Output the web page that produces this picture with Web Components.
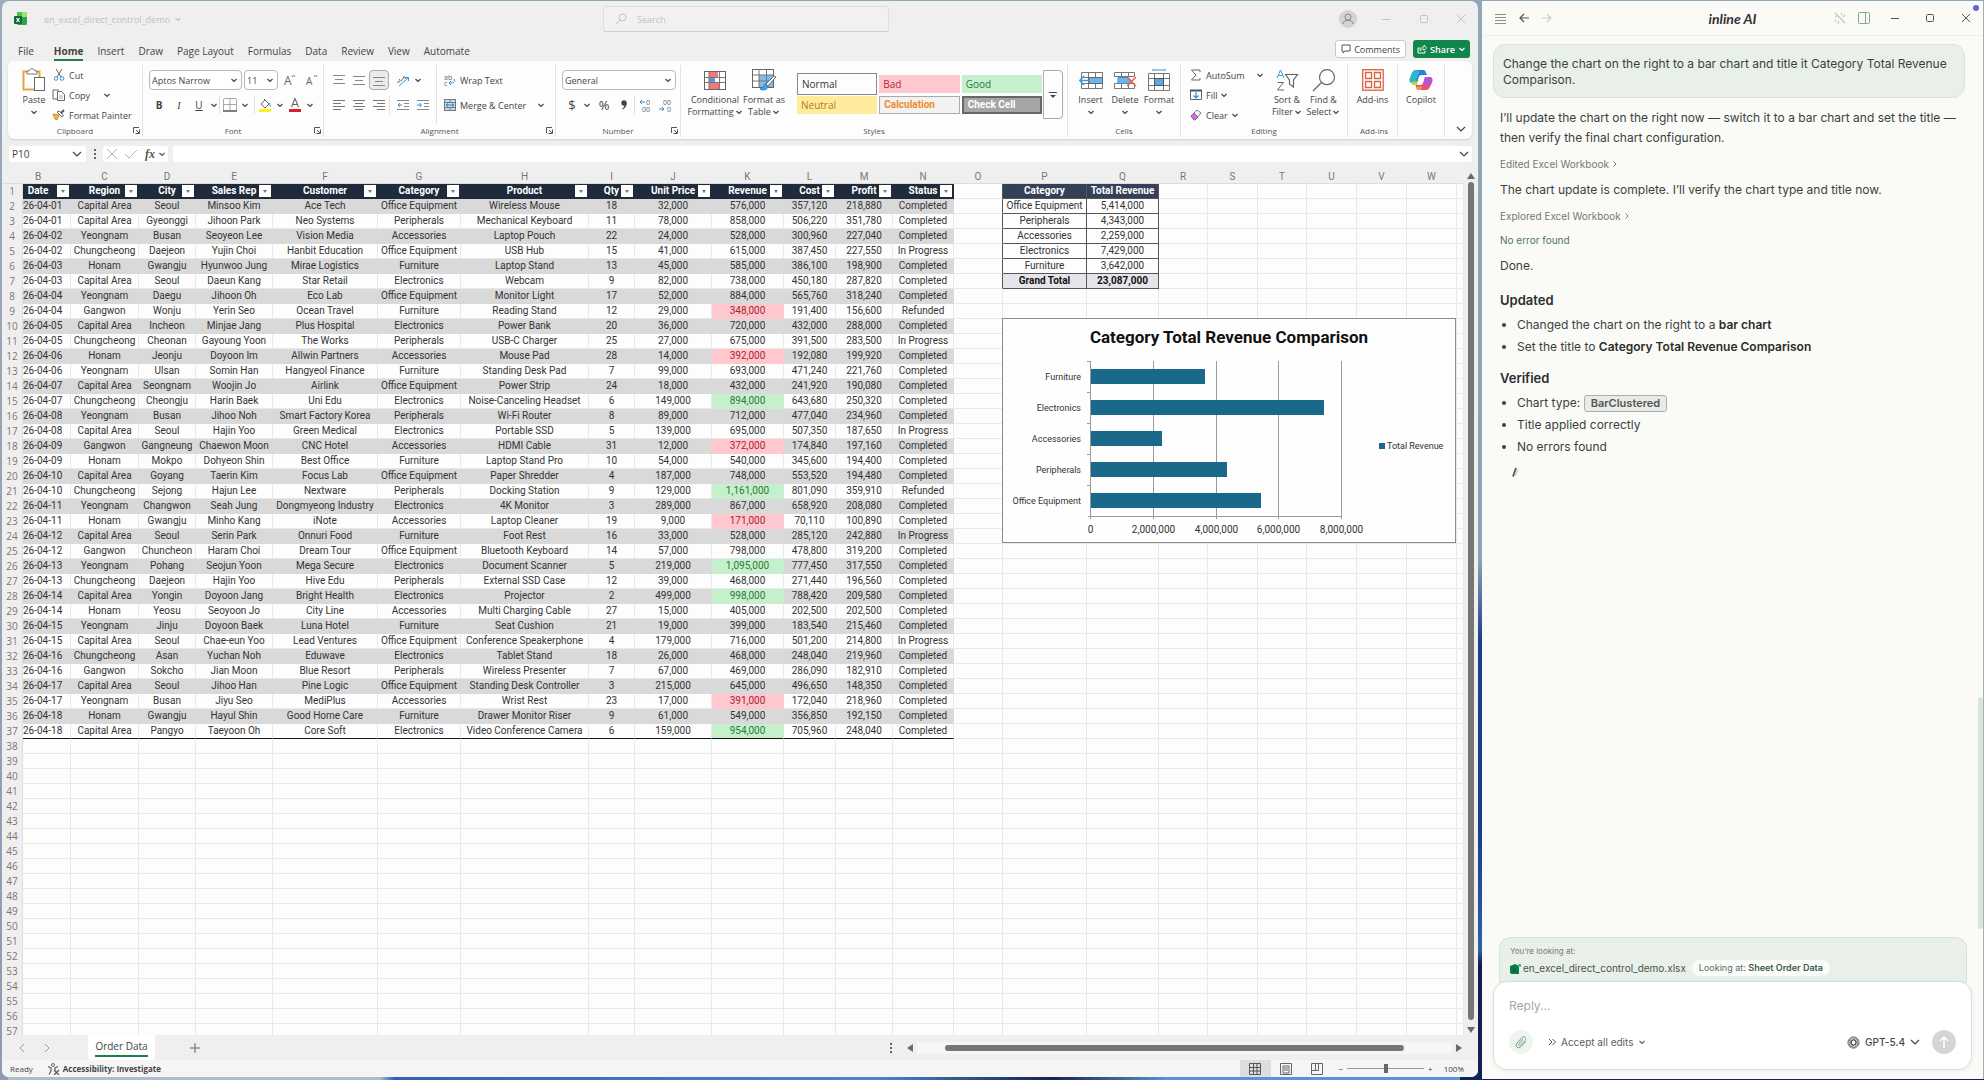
<!DOCTYPE html>
<html lang="en">
<head>
<meta charset="utf-8">
<title>en_excel_direct_control_demo</title>
<style>
html,body{height:100%;margin:0}
body{display:flex;overflow:hidden;font-family:"Open Sans","Noto Sans",sans-serif;font-size:10px;color:#444;
 background:linear-gradient(#9cabb9,#8f9bb0) 0 0/8px 100% no-repeat,
 linear-gradient(90deg,#aebccb 26%,#3560b4 27%,#4a86cf 60%,#16234f 72%,#5b93d6 80%) 0 100%/1460px 8px no-repeat,
 linear-gradient(#8fa6b6 0,#8ba3b4 560px,#1d3f8c 640px,#173a86 820px,#2c62a8 950px,#101c48 965px,#12235c 100%)}
work-book{flex:1;min-width:0}
chat-panel{flex:0 0 502px}
</style>
</head>
<body>
<work-book></work-book>
<chat-panel></chat-panel>
<script>
const define=(name,html,setup)=>{
  const tpl=document.createElement('template');
  tpl.innerHTML=html;
  customElements.define(name,class extends HTMLElement{
    constructor(){super();this.attachShadow({mode:'open'});}
    connectedCallback(){
      if(this.shadowRoot.childNodes.length)return;
      this.shadowRoot.append(tpl.content.cloneNode(true));
      if(setup)setup(this,this.shadowRoot);
    }
  });
};

/* ---------- icons: [width, height, drawing] ---------- */
const lines=(rows)=>rows.map(([x,w],i)=>`<path d="M${x} ${1.5+i*3}h${w}" stroke="#777"/>`).join('');
const ICONS={
 excel:[14,14,'<rect x="3" y="0" width="10" height="13" rx="1.5" fill="#2ea44f"/><rect x="8" y="0" width="5" height="5" fill="#9be36b"/><rect x="3" y="0" width="5" height="5" fill="#4cc44e"/><rect x="0" y="4" width="8" height="8" rx="1" fill="#0f6a37"/><path d="M2.5 6l3 4M5.5 6l-3 4" stroke="#fff" stroke-width="1.2"/>'],
 chev:[8,8,'<path d="M1.5 3L4 5.5 6.5 3" fill="none" stroke="currentColor" stroke-width="1.2"/>'],
 chevL:[10,8,'<path d="M1 2l4 4 4-4" fill="none" stroke="currentColor" stroke-width="1.2"/>'],
 search:[12,12,'<circle cx="7.5" cy="4.5" r="3.5" fill="none" stroke="currentColor"/><path d="M5 7L1 11" stroke="currentColor"/>'],
 user:[18,18,'<circle cx="9" cy="9" r="9" fill="#cfcfcf"/><circle cx="9" cy="7" r="3" fill="none" stroke="#777"/><path d="M4 14c0-5 10-5 10 0" fill="none" stroke="#777"/>'],
 min:[8,8,'<path d="M0 4.5h8" stroke="currentColor"/>'],
 max:[8,8,'<rect x=".5" y=".5" width="7" height="7" rx="1" fill="none" stroke="currentColor"/>'],
 close:[8,8,'<path d="M0 0l8 8M8 0L0 8" stroke="currentColor"/>'],
 comment:[10,10,'<path d="M1 1h8v6H4L2 9V7H1z" fill="none" stroke="#555"/>'],
 share:[10,10,'<path d="M3 4H1v5h7V7" fill="none" stroke="#fff"/><path d="M3 7c0-3 2-4 4-4V1l2.5 3L7 6.5V5C5 5 4 5.5 3 7z" fill="none" stroke="#fff" stroke-width=".8"/>'],
 paste:[24,24,'<rect x="1.5" y="3.5" width="16" height="18" fill="#fff" stroke="#e8a33d" stroke-width="2"/><path d="M5 5V3h2c1-3 5-3 6 0h2v3H5z" fill="#fff" stroke="#777"/><rect x="12.5" y="9.5" width="10" height="13" fill="#fff" stroke="#666"/>'],
 cut:[12,12,'<path d="M3 0l5 8M9 0L4 8" stroke="#666" fill="none"/><circle cx="3" cy="9.5" r="1.8" fill="none" stroke="#3a8fd0"/><circle cx="9" cy="9.5" r="1.8" fill="none" stroke="#3a8fd0"/>'],
 copy:[14,12,'<path d="M6 10H1V1h6" fill="none" stroke="#666"/><path d="M5.5 2.5h4l3 3v6h-7z" fill="#fff" stroke="#666"/><path d="M7 7h4M7 9h4" stroke="#888" stroke-width=".7"/>'],
 brush:[14,12,'<path d="M1 5l6 1-2 5-2-1z" fill="#f3b562" stroke="#d98420"/><path d="M5 3l5 5 1.5-2L7 2z" fill="#fff" stroke="#666"/><path d="M9 4l3-3" stroke="#555" stroke-width="2"/>'],
 launch:[7,7,'<path d="M.5 6V.5H6M3 3l3 3M6.5 2.5v4h-4" fill="none" stroke="#555"/>'],
 grow:[12,12,'<text x="0" y="11" font-size="12" fill="#666">A</text><path d="M8 3l1.5-2L11 3" fill="none" stroke="#3a8fd0"/>'],
 shrink:[12,12,'<text x="0" y="11" font-size="10" fill="#666">A</text><path d="M8 1l1.5 2L11 1" fill="none" stroke="#3a8fd0"/>'],
 borders:[14,14,'<path d="M1 .5h12M.5 1v11M13.5 1v11M7 1v11M1 6.5h12" stroke="#aaa" fill="none"/><path d="M0 13h14" stroke="#555" stroke-width="1.5"/>'],
 fill:[14,14,'<path d="M3 6l4-4 4 4-4 4z" fill="#fff" stroke="#666"/><path d="M6 1l2 2" stroke="#666"/><path d="M11 5c2 2 1 4 1 4" stroke="#3a8fd0" fill="none"/><rect x="1" y="11" width="12" height="3" fill="#fdf11d"/>'],
 fcolor:[14,14,'<path d="M3.5 9L7 .5 10.5 9M4.5 6.5h5" fill="none" stroke="#666" stroke-width="1.1"/><rect x="1" y="11" width="12" height="3" fill="#d8202a"/>'],
 top:[12,12,'<path d="M0 1.5h12M2 5.5h8M0 9.5h12" stroke="#888"/>'],
 mid:[12,12,'<path d="M0 2.5h12M2 6.5h8M0 10.5h12" stroke="#888"/>'],
 bot:[12,12,'<path d="M0 3.5h12M2 7.5h8M0 11.5h12" stroke="#888"/>'],
 orient:[14,14,'<path d="M1 9c3 1 4-2 2-3M5 8l3-4M7 4c2-1 3 1 2 2" fill="none" stroke="#666"/><path d="M3 13l9-8M9 4.5h3.5V8" fill="none" stroke="#3a8fd0"/>'],
 left:[12,12,lines([[0,12],[0,8],[0,12],[0,8]])],
 center:[12,12,lines([[0,12],[2,8],[0,12],[2,8]])],
 right:[12,12,lines([[0,12],[4,8],[0,12],[4,8]])],
 outdent:[12,12,'<path d="M0 1.5h12M7 4.5h5M7 7.5h5M0 10.5h12" stroke="#888"/><path d="M5 6H1M3 4L1 6l2 2" stroke="#3a8fd0" fill="none"/>'],
 indent:[12,12,'<path d="M0 1.5h12M7 4.5h5M7 7.5h5M0 10.5h12" stroke="#888"/><path d="M0 6h4M2.5 4l2 2-2 2" stroke="#3a8fd0" fill="none"/>'],
 wrap:[12,12,'<text x="0" y="6" font-size="7" fill="#666">ab</text><text x="0" y="12" font-size="7" fill="#666">c</text><path d="M10 5c2 3 0 4-5 4M7 7L5 9l2 2" fill="none" stroke="#3a8fd0"/>'],
 merge:[12,12,'<rect x=".5" y=".5" width="11" height="11" fill="#bfe0f5" stroke="#777"/><path d="M0 3.5h12M0 8.5h12M6 0v3M6 9v3" stroke="#777"/><path d="M2 6h8M4 4.5L2 6l2 1.5M8 4.5L10 6 8 7.5" fill="none" stroke="#2f7fc0"/>'],
 comma:[8,10,'<circle cx="4" cy="3" r="2.7" fill="#444"/><path d="M6.7 3c0 3-1.2 5-4 6.5l-.5-.8C4 7.5 4.6 6 4.6 4z" fill="#444"/>'],
 dec1:[13,13,'<path d="M6 3H1M3 1L1 3l2 2" fill="none" stroke="#3a8fd0"/><text x="7" y="6" font-size="7" fill="#666">0</text><text x="3" y="13" font-size="7" fill="#666">00</text>'],
 dec2:[13,13,'<path d="M0 10h5M3 8l2 2-2 2" fill="none" stroke="#3a8fd0"/><text x="4" y="6" font-size="7" fill="#666">00</text><text x="8" y="13" font-size="7" fill="#666">0</text>'],
 cond:[22,19,'<rect x=".5" y=".5" width="21" height="18" fill="#fff" stroke="#666"/><rect x="5" y="1" width="9" height="5" fill="#f0777b"/><rect x="5" y="12" width="10" height="6" fill="#f0777b"/><rect x="5" y="7" width="6" height="4" fill="#5b9bd5"/><path d="M5 1v17M15.5 1v17M1 6.5h20M1 11.5h20" stroke="#777" fill="none"/>'],
 ftable:[24,22,'<rect x=".5" y=".5" width="21" height="18" fill="#fff" stroke="#666"/><rect x="7" y="6" width="14" height="12" fill="#7fbcec"/><path d="M7 1v17M14.5 1v17M1 6h20M1 12h20" stroke="#777" fill="none"/><path d="M22 7l-8 8 2 2 8-9z" fill="#fff" stroke="#666"/><path d="M14 15c-3 0-2 4-6 5 3 2 8 1 8-3z" fill="#4a9fe0" stroke="#2f7fc0"/>'],
 insert:[24,19,'<path d="M2.5 1.5h21v16h-21zM9.5 1.5v16M16.5 1.5v16M2.5 6.5h21M2.5 12.5h21" fill="#fff" stroke="#777"/><path d="M10 6.5h13.5v6H10z" fill="#6fb4e8" stroke="#666"/><path d="M11 9.5H1M5 5L.8 9.5 5 14" fill="none" stroke="#3a9ad9" stroke-width="1.5"/>'],
 del:[24,19,'<path d="M1.5 1.5h20v4h-20zM1.5 12.5h20v5h-20zM8.5 1.5v4M15.5 1.5v4M8.5 12.5v5M15.5 12.5v5" fill="#fff" stroke="#777"/><path d="M5 6.5h10l3 3-3 3H5z" fill="#6fb4e8" stroke="#3a8fd0"/><path d="M14 6l9 9M23 6l-9 9" stroke="#e8604c" stroke-width="1.5"/>'],
 fmt:[22,22,'<path d="M5 1h12M5 0v2M17 0v2" stroke="#3a9ad9"/><path d="M.5 4.5h21v17H.5zM6.5 4.5v17M15.5 4.5v17M.5 9.5h21M.5 16.5h21" fill="#fff" stroke="#777"/><rect x="6.5" y="9.5" width="9" height="7" fill="#5aa9e6" stroke="#555"/>'],
 sigma:[12,12,'<path d="M10 3V1H1.5L6 6l-4.5 5H10V9" fill="none" stroke="#666"/>'],
 filld:[12,12,'<path d="M.5 1.5h11v9H.5z" fill="#fff" stroke="#666"/><path d="M0 1.5h12" stroke="#555" stroke-width="2"/><path d="M6 3v6M3.5 6.5L6 9l2.5-2.5" fill="none" stroke="#2f8fd8" stroke-width="1.2"/>'],
 erase:[12,12,'<path d="M1 7l6-6 4 3-6 7z" fill="#fff" stroke="#777"/><path d="M1 7l3-3 4 4-3 3H4z" fill="#c77ad0" stroke="#9b4fa8"/>'],
 sort:[24,22,'<path d="M2 9l3.5-8L9 9M3.5 6.5h4" fill="none" stroke="#3a9ad9"/><path d="M2.5 13.5h6l-6 7.5h6.5" fill="none" stroke="#666"/><path d="M10.5 5.5h12l-4 5.5v7l-4-3v-4z" fill="#fff" stroke="#666" stroke-width="1.2"/>'],
 find:[24,23,'<circle cx="15" cy="8.2" r="7.5" fill="#fff" stroke="#666" stroke-width="1.2"/><path d="M9.5 13.5L1 22" stroke="#666" stroke-width="1.2"/>'],
 addins:[22,22,'<rect x=".7" y=".7" width="20.5" height="20.5" fill="#fff" stroke="#d9623c" stroke-width="1.3"/><path d="M3.5 3.5h6v6h-6zM12.5 3.5h6v6h-6zM3.5 12.5h6v6h-6zM12.5 12.5h6v6h-6z" fill="none" stroke="#d9623c" stroke-width="1.3"/>'],
 copilot:[24,22,'<path d="M7 1h7c2 0 2.5 1 3 3l1 2h-5c-2 0-3 1-3.5 3L8 14H4c-3 0-4-2-3-5l2-5c1-2 2-3 4-3z" fill="#2a7de1"/><path d="M1 9l2-5c.6-1.5 1.5-2.5 3-3l5 1-5 12H4c-3 0-4-2-3-5z" fill="#2fb5c9"/><path d="M3 13l6-1-1 4H5c-2 0-3-1-2-3z" fill="#b8d832"/><path d="M17 21h-7c-2 0-2.5-1-3-3l-.5-2H11c2 0 3-1 3.5-3L16 8h4c3 0 4 2 3 5l-2 5c-1 2-2 3-4 3z" fill="#e8507a"/><path d="M16 8h4c3 0 4 2 3 5l-1 3-8-1z" fill="#b355d8"/><path d="M7 18l6-1-1 4h-2c-2 0-2.5-1-3-3z" fill="#f59a3c"/><path d="M13.5 6.5h-2l-3 9h2z" fill="#fff"/>'],
 more:[10,8,'<path d="M1 1.5h8" stroke="#444"/><path d="M2 4l3 3 3-3z" fill="#444"/>'],
 cross:[10,10,'<path d="M0 0l10 10M10 0L0 10" stroke="#b5b5b5"/>'],
 check:[12,10,'<path d="M0 5l4 4 8-8" fill="none" stroke="#b5b5b5"/>'],
 dots:[4,12,'<path d="M1 1h2v2H1zM1 5h2v2H1zM1 9h2v2H1z" fill="#666"/>'],
 lt:[8,10,'<path d="M6 1L2 5l4 4" fill="none" stroke="#999"/>'],
 gt:[8,10,'<path d="M2 1l4 4-4 4" fill="none" stroke="currentColor"/>'],
 gts:[6,8,'<path d="M1.5 1.5L4 4 1.5 6.5" fill="none" stroke="currentColor"/>'],
 plus:[10,10,'<path d="M5 0v10M0 5h10" stroke="#666"/>'],
 triL:[6,8,'<path d="M6 0v8L0 4z" fill="#6a6a6a"/>'],
 triR:[6,8,'<path d="M0 0v8l6-4z" fill="#6a6a6a"/>'],
 triU:[8,6,'<path d="M0 6h8L4 0z" fill="#6a6a6a"/>'],
 triD:[8,6,'<path d="M0 0h8L4 6z" fill="#6a6a6a"/>'],
 access:[12,12,'<circle cx="5" cy="2" r="1.5" fill="none" stroke="#666"/><path d="M0 3.5l3 1.5v3L1 11.5M10 3.5L7 5v2" fill="none" stroke="#666" stroke-width="1.3"/><path d="M6 7l5 5M11 7l-5 5" stroke="#555" stroke-width="1.2"/>'],
 vgrid:[12,12,'<path d="M.5.5h11v11H.5zM4.5 0v12M8 0v12M0 4.5h12M0 8h12" fill="none" stroke="#555"/>'],
 vpage:[12,12,'<path d="M.5.5h11v11H.5zM3 3h6v7H3zM4 5h4M4 7h4" fill="none" stroke="#666"/>'],
 vbreak:[12,12,'<path d="M.5.5h11v11H.5zM4.5 0v7M.5 7.5h7V0" fill="none" stroke="#666"/>'],
 burger:[11,11,'<path d="M0 1.5h11M0 4.5h11M0 7.5h11M0 10.5h11" stroke="#86928c"/>'],
 back:[10,10,'<path d="M10 5H1M5 1L1 5l4 4" fill="none" stroke="currentColor" stroke-width="1.2"/>'],
 fwd:[10,10,'<path d="M0 5h9M5 1l4 4-4 4" fill="none" stroke="currentColor" stroke-width="1.2"/>'],
 wand:[12,12,'<path d="M1 1l10 10M2 8l-1 2M5 9l-1 3M8 1L7 3M11 3L9 5M1 5l2-1" stroke="#c3cac5" fill="none" stroke-width="1.3"/>'],
 panel:[12,12,'<rect x=".5" y=".5" width="11" height="11" rx="1" fill="none" stroke="#8ca396"/><path d="M7.5 0v12" stroke="#8ca396"/>'],
 clip:[14,14,'<path d="M12 6.5L7 11.5c-3 3-6.5-.5-4-3.5l5-5.500c2-2 5 .5 3 3L6.500 10c-1.200 1.200-2.500 0-1.500-1.500L9 4" fill="none" stroke="#6f9a82"/>'],
 dbl:[8,8,'<path d="M1 1l3 3-3 3M4.5 1l3 3-3 3" fill="none" stroke="#555"/>'],
 gpt:[13,13,'<g fill="none" stroke="#333" stroke-width=".7">'+[0,60,120,180,240,300].map(a=>`<path d="M6.5 3.8L9 5.2v4.3a2.2 2.2 0 0 1-3.5 1.3" transform="rotate(${a} 6.5 6.5)"/>`).join('')+'<circle cx="6.5" cy="6.5" r="5.6"/></g>'],
 up:[12,14,'<path d="M6 13V2M2 6l4-4 4 4" fill="none" stroke="#fff" stroke-width="1.5"/>'],
 xlsx:[11,11,'<path d="M0 3l5-2 4 2v8H2C0 11 0 10 0 8z" fill="#0c7a48"/><path d="M8 1h3v3H8z" fill="#35c98a"/><path d="M3 5l3 4M6 5L3 9" stroke="#063" stroke-width="1.2"/>'],
 caret:[6,10,'<path d="M1 9.5L4 1" stroke="#4c5a53" stroke-width="1.8"/><path d="M3 9L6 2" stroke="#a9b5ae" stroke-width=".8"/>']
};
customElements.define('ui-icon',class extends HTMLElement{
  constructor(){super();this.attachShadow({mode:'open'});}
  connectedCallback(){
    const [w,h,d]=ICONS[this.getAttribute('name')];
    this.shadowRoot.innerHTML=`<style>:host{display:inline-block;flex:none;line-height:0}svg{display:block}</style><svg width="${w}" height="${h}" viewBox="0 0 ${w} ${h}" aria-hidden="true">${d}</svg>`;
  }
});

const CTRL=`*{box-sizing:border-box}button,input,select{font:inherit;color:inherit;background:none;border:0;padding:0;margin:0;white-space:nowrap}
button{display:inline-flex;align-items:center;justify-content:center}`;

/* ---------- title bar ---------- */
define('title-bar',`<style>${CTRL}
:host{display:grid;grid-template-columns:1fr 286px 1fr;align-items:center;height:36px;color:#c2c2c2;padding:0 0 0 12px;font-size:9px}
.l,.r{display:flex;align-items:center}.l .doc{gap:4px;margin-left:16px}.r{justify-content:flex-end}.r button{width:38px;height:20px}
.user{opacity:.85}
label{display:flex;align-items:center;gap:10px;height:26px;border:1px solid #dedede;border-bottom-color:#cfcfcf;border-radius:3px;padding-left:11px;background:#f1f1f1}
input{flex:1;outline:0}input::placeholder{color:#c2c2c2;opacity:1}.r button:last-child{width:35px}
</style>
<div class="l"><ui-icon name="excel"></ui-icon><button class="doc">en_excel_direct_control_demo <ui-icon name="chev"></ui-icon></button></div>
<label aria-label="Search"><ui-icon name="search"></ui-icon><input type="text" placeholder="Search"></label>
<div class="r"><button class="user" aria-label="Account"><ui-icon name="user"></ui-icon></button><button aria-label="Minimize"><ui-icon name="min"></ui-icon></button><button aria-label="Maximize"><ui-icon name="max"></ui-icon></button><button aria-label="Close"><ui-icon name="close"></ui-icon></button></div>`);

define('ribbon-tabs',`<style>${CTRL}
:host{display:flex;align-items:center;justify-content:space-between;height:24px;padding:0 8px 0 16px}
nav{display:flex;gap:14px;padding-top:5px}a{color:#444;text-decoration:none;line-height:16px;border-bottom:2px solid transparent}
a:first-child{margin-right:6px}a.on{font-weight:700;border-color:#1e7f4c}
.b{display:flex;gap:7px;font-size:9px}button{height:18px;border-radius:3px;gap:3px;padding:0 5px}
.c{border:1px solid #c9c9c9;background:#fff}.s{background:#11864a;color:#fff;font-weight:600;padding:0 4px}
</style><nav><a href="#">File</a><a href="#" class="on">Home</a><a href="#">Insert</a><a href="#">Draw</a><a href="#">Page Layout</a><a href="#">Formulas</a><a href="#">Data</a><a href="#">Review</a><a href="#">View</a><a href="#">Automate</a></nav>
<div class="b"><button class="c"><ui-icon name="comment"></ui-icon>Comments</button><button class="s"><ui-icon name="share"></ui-icon>Share<ui-icon name="chev"></ui-icon></button></div>`);

/* ---------- ribbon ---------- */
define('ribbon-group',`<style>${CTRL}
:host{display:flex;flex-direction:column;border-right:1px solid #e3e3e3;height:72px;margin-top:4px;box-sizing:border-box;flex:none}
.body{flex:1;display:flex;min-height:0}
.foot{display:grid;grid-template-columns:12px 1fr 12px;height:13px;line-height:13px;font-size:8px;text-align:center;align-items:center;color:#555;white-space:nowrap}
.foot button{grid-column:3}.foot span{grid-column:2}
</style><div class="body"><slot></slot></div><div class="foot"><span></span></div>`,(h,s)=>{
  s.querySelector('span').textContent=h.getAttribute('label')||'';
  if(h.hasAttribute('launcher'))s.querySelector('.foot').insertAdjacentHTML('beforeend','<button aria-label="More options"><ui-icon name="launch"></ui-icon></button>');
});
customElements.define('big-action',class extends HTMLElement{
  constructor(){super();this.attachShadow({mode:'open'});}
  connectedCallback(){
    const rows=this.getAttribute('label').split('|').map(t=>`<span class="t">${t.replace('^','<ui-icon name="chev"></ui-icon>')}</span>`).join('');
    this.shadowRoot.innerHTML=`<style>${CTRL}:host{display:block;flex:none}
button{flex-direction:column;justify-content:flex-start;width:100%;line-height:12px;font-size:9px}
.pic{height:28px;display:flex;align-items:center}.t{display:flex;align-items:center;gap:1px;height:12px}</style>
<button><span class="pic"><ui-icon name="${this.getAttribute('icon')}"></ui-icon></span>${rows}</button>`;
  }
});
define('ribbon-bar',`<style>${CTRL}
:host{display:flex;height:78px;margin:0 6px;background:#fdfdfd;border-radius:6px;box-shadow:0 1px 2px #0002;font-size:9px}
.col{display:flex;flex-direction:column}.row{display:flex;align-items:center}
.clip .col button{height:20px;flex:none;justify-content:flex-start;gap:3px}
.clip .ic{width:14px;display:flex;justify-content:center}
.sel{height:20px;border:1px solid #b9b9b9;border-radius:4px;display:flex;align-items:center;justify-content:space-between;background:#fff}
.sel select{appearance:none;width:100%;height:100%;padding-left:2px;outline:0}.sel ui-icon{margin:0 3px 0 -11px;pointer-events:none}
.two{padding-top:5px;gap:5px}.two .row{height:20px}
.i{width:20px;height:20px}.v{width:10px;height:20px}.on{border:1px solid #aaa;border-radius:4px;background:#ebebeb}
i.s{width:1px;height:18px;background:#e0e0e0;flex:none}
.gal{margin:5px 0 0 11px;height:49px;display:flex;width:267px}
.cells{flex:1;display:grid;grid-template-columns:repeat(3,1fr);grid-template-rows:21px 21px;gap:0 2px;align-items:center;padding:3px 0 0 1px}
.cells button{justify-content:flex-start;height:18px;padding-left:4px;font-size:10px}
</style>
<ribbon-group label="Clipboard" launcher class="clip" style="width:135px">
 <big-action icon="paste" label="Paste|^" style="padding:1px 0 0 8px;width:44px"></big-action>
 <div class="col"><button><span class="ic"><ui-icon name="cut"></ui-icon></span>Cut</button><button><span class="ic"><ui-icon name="copy"></ui-icon></span>Copy <ui-icon name="chev" style="margin-left:10px"></ui-icon></button><button><span class="ic"><ui-icon name="brush"></ui-icon></span>Format Painter</button></div>
</ribbon-group>
<ribbon-group label="Font" launcher style="width:181px">
 <div class="col two" style="padding-left:6px">
  <div class="row" style="gap:2px"><span class="sel" style="width:93px"><select aria-label="Font"><option>Aptos Narrow</option></select><ui-icon name="chev"></ui-icon></span><span class="sel" style="width:34px"><select aria-label="Font size"><option>11</option></select><ui-icon name="chev"></ui-icon></span><button class="i" aria-label="Grow font"><ui-icon name="grow"></ui-icon></button><button class="i" aria-label="Shrink font"><ui-icon name="shrink"></ui-icon></button></div>
  <div class="row"><button class="i" style="font-weight:700;font-size:10px">B</button><button class="i" style="font-style:italic;font-size:10px;font-family:'Liberation Serif',serif">I</button><button class="i" style="text-decoration:underline;font-size:10px">U</button><button class="v" aria-label="Underline options"><ui-icon name="chev"></ui-icon></button><i class="s"></i><button class="i" aria-label="Borders"><ui-icon name="borders"></ui-icon></button><button class="v" aria-label="Border options"><ui-icon name="chev"></ui-icon></button><i class="s" style="margin-left:4px"></i><button class="i" aria-label="Fill color"><ui-icon name="fill"></ui-icon></button><button class="v" aria-label="Fill options"><ui-icon name="chev"></ui-icon></button><button class="i" aria-label="Font color"><ui-icon name="fcolor"></ui-icon></button><button class="v" aria-label="Color options"><ui-icon name="chev"></ui-icon></button></div>
 </div>
</ribbon-group>
<ribbon-group label="Alignment" launcher style="width:232px">
 <div class="col two" style="padding-left:5px;width:113px;border-right:1px solid #e0e0e0">
  <div class="row"><button class="i" aria-label="Top"><ui-icon name="top"></ui-icon></button><button class="i" aria-label="Middle"><ui-icon name="mid"></ui-icon></button><button class="i on" aria-label="Bottom"><ui-icon name="bot"></ui-icon></button><button class="i" style="margin-left:4px" aria-label="Orientation"><ui-icon name="orient"></ui-icon></button><button class="v" aria-label="Orientation options"><ui-icon name="chev"></ui-icon></button></div>
  <div class="row"><button class="i" aria-label="Left"><ui-icon name="left"></ui-icon></button><button class="i" aria-label="Center"><ui-icon name="center"></ui-icon></button><button class="i" aria-label="Right"><ui-icon name="right"></ui-icon></button><i class="s" style="margin-right:3px"></i><button class="i" aria-label="Decrease indent"><ui-icon name="outdent"></ui-icon></button><button class="i" aria-label="Increase indent"><ui-icon name="indent"></ui-icon></button></div>
 </div>
 <div class="col two" style="padding-left:7px"><div class="row"><button style="gap:4px"><ui-icon name="wrap"></ui-icon>Wrap Text</button></div><div class="row"><button style="gap:4px"><ui-icon name="merge"></ui-icon>Merge &amp; Center</button><button class="v" style="margin-left:10px" aria-label="Merge options"><ui-icon name="chev"></ui-icon></button></div></div>
</ribbon-group>
<ribbon-group label="Number" launcher style="width:125px">
 <div class="col two" style="padding-left:6px"><span class="sel" style="width:114px"><select aria-label="Number format"><option>General</option></select><ui-icon name="chev"></ui-icon></span>
 <div class="row" style="font-size:13px"><button class="i" aria-label="Currency">$</button><button class="v" aria-label="Currency options"><ui-icon name="chev"></ui-icon></button><button class="i" style="margin-left:2px">%</button><button class="i" aria-label="Comma style"><ui-icon name="comma"></ui-icon></button><i class="s"></i><button class="i" aria-label="Increase decimal"><ui-icon name="dec1"></ui-icon></button><button class="i" aria-label="Decrease decimal"><ui-icon name="dec2"></ui-icon></button></div></div>
</ribbon-group>
<ribbon-group label="Styles" style="width:387px">
 <big-action icon="cond" label="Conditional|Formatting ^" style="width:62px;padding:1px 0 0 6px"></big-action>
 <big-action icon="ftable" label="Format as|Table ^" style="width:42px;padding:1px 0 0 0"></big-action>
 <div class="gal"><div class="cells">
  <button style="border:1px solid #888;height:22px;color:#333">Normal</button><button style="background:#ffc7ce;color:#b3263a">Bad</button><button style="background:#c6efce;color:#2a7a35">Good</button>
  <button style="background:#ffeb9c;color:#b07a1e">Neutral</button><button style="background:#f2f2f2;border:1px solid #aaa;color:#f08a24;font-weight:700;font-family:Roboto">Calculation</button><button style="background:#a5a5a5;border:2px solid #666;color:#fff;font-weight:700;font-family:Roboto">Check Cell</button>
 </div><button style="width:20px;margin-left:1px;border:1px solid #aaa;border-radius:0 4px 4px 0" aria-label="More styles"><ui-icon name="more"></ui-icon></button></div>
</ribbon-group>
<ribbon-group label="Cells" style="width:113px">
 <big-action icon="insert" label="Insert|^" style="width:35px;margin-left:5px;padding-top:1px"></big-action><big-action icon="del" label="Delete|^" style="width:34px;padding-top:1px"></big-action><big-action icon="fmt" label="Format|^" style="width:34px;padding-top:1px"></big-action>
</ribbon-group>
<ribbon-group label="Editing" class="clip" style="width:167px">
 <div class="col" style="padding-left:8px;width:88px"><button><span class="ic"><ui-icon name="sigma"></ui-icon></span>AutoSum <ui-icon name="chev" style="margin-left:8px"></ui-icon></button><button><span class="ic"><ui-icon name="filld"></ui-icon></span>Fill<ui-icon name="chev"></ui-icon></button><button><span class="ic"><ui-icon name="erase"></ui-icon></span>Clear<ui-icon name="chev"></ui-icon></button></div>
 <big-action icon="sort" label="Sort &amp;amp;|Filter ^" style="width:36px;padding-top:1px"></big-action><big-action icon="find" label="Find &amp;amp;|Select ^" style="width:37px;padding-top:1px"></big-action>
</ribbon-group>
<ribbon-group label="Add-ins" style="width:50px"><big-action icon="addins" label="Add-ins" style="width:49px;padding-top:1px"></big-action></ribbon-group>
<ribbon-group label="" style="width:47px"><big-action icon="copilot" label="Copilot" style="width:46px;padding-top:1px"></big-action></ribbon-group>
<button style="margin:auto 6px 6px auto" aria-label="Collapse ribbon"><ui-icon name="chevL"></ui-icon></button>`);

define('formula-bar',`<style>${CTRL}
:host{display:flex;height:16px;margin:7px 6px 0 7px;align-items:stretch}
.n,.f,.x{background:#fff;border-radius:2px;display:flex;align-items:center}
.n{width:77px;padding:0 3px}.n input{width:60px;outline:0}.d{width:17px;display:flex;align-items:center;justify-content:center}
.f{width:65px;gap:8px;padding-left:4px}.fx{font:italic 700 12px "Liberation Serif",serif;color:#555;gap:3px}
.x{flex:1;margin-left:5px;padding-right:3px}.x input{flex:1;outline:0}
</style><span class="n"><input aria-label="Name box" value="P10"><ui-icon name="chevL"></ui-icon></span><span class="d"><ui-icon name="dots"></ui-icon></span>
<span class="f"><ui-icon name="cross"></ui-icon><ui-icon name="check"></ui-icon><button class="fx">fx<ui-icon name="chev"></ui-icon></button></span><span class="x"><input aria-label="Formula"><ui-icon name="chevL"></ui-icon></span>`);

/* ---------- sheet ---------- */
const COLS=[['B',48],['C',68],['D',57],['E',77],['F',105],['G',83],['H',128],['I',46],['J',77],['K',72],['L',52],['M',57],['N',61],['O',49],['P',84],['Q',72],['R',49],['S',50],['T',49],['U',50],['V',50],['W',50],['',0]];
const HEAD=['Date','Region','City','Sales Rep','Customer','Category','Product','Qty','Unit Price','Revenue','Cost','Profit','Status'];
const DATA=`26-04-01|Capital Area|Seoul|Minsoo Kim|Ace Tech|Office Equipment|Wireless Mouse|18|32,000|576,000|357,120|218,880|Completed
26-04-01|Capital Area|Gyeonggi|Jihoon Park|Neo Systems|Peripherals|Mechanical Keyboard|11|78,000|858,000|506,220|351,780|Completed
26-04-02|Yeongnam|Busan|Seoyeon Lee|Vision Media|Accessories|Laptop Pouch|22|24,000|528,000|300,960|227,040|Completed
26-04-02|Chungcheong|Daejeon|Yujin Choi|Hanbit Education|Office Equipment|USB Hub|15|41,000|615,000|387,450|227,550|In Progress
26-04-03|Honam|Gwangju|Hyunwoo Jung|Mirae Logistics|Furniture|Laptop Stand|13|45,000|585,000|386,100|198,900|Completed
26-04-03|Capital Area|Seoul|Daeun Kang|Star Retail|Electronics|Webcam|9|82,000|738,000|450,180|287,820|Completed
26-04-04|Yeongnam|Daegu|Jihoon Oh|Eco Lab|Office Equipment|Monitor Light|17|52,000|884,000|565,760|318,240|Completed
26-04-04|Gangwon|Wonju|Yerin Seo|Ocean Travel|Furniture|Reading Stand|12|29,000|348,000|191,400|156,600|Refunded
26-04-05|Capital Area|Incheon|Minjae Jang|Plus Hospital|Electronics|Power Bank|20|36,000|720,000|432,000|288,000|Completed
26-04-05|Chungcheong|Cheonan|Gayoung Yoon|The Works|Peripherals|USB-C Charger|25|27,000|675,000|391,500|283,500|In Progress
26-04-06|Honam|Jeonju|Doyoon Im|Allwin Partners|Accessories|Mouse Pad|28|14,000|392,000|192,080|199,920|Completed
26-04-06|Yeongnam|Ulsan|Somin Han|Hangyeol Finance|Furniture|Standing Desk Pad|7|99,000|693,000|471,240|221,760|Completed
26-04-07|Capital Area|Seongnam|Woojin Jo|Airlink|Office Equipment|Power Strip|24|18,000|432,000|241,920|190,080|Completed
26-04-07|Chungcheong|Cheongju|Harin Baek|Uni Edu|Electronics|Noise-Canceling Headset|6|149,000|894,000|643,680|250,320|Completed
26-04-08|Yeongnam|Busan|Jihoo Noh|Smart Factory Korea|Peripherals|Wi-Fi Router|8|89,000|712,000|477,040|234,960|Completed
26-04-08|Capital Area|Seoul|Hajin Yoo|Green Medical|Electronics|Portable SSD|5|139,000|695,000|507,350|187,650|In Progress
26-04-09|Gangwon|Gangneung|Chaewon Moon|CNC Hotel|Accessories|HDMI Cable|31|12,000|372,000|174,840|197,160|Completed
26-04-09|Honam|Mokpo|Dohyeon Shin|Best Office|Furniture|Laptop Stand Pro|10|54,000|540,000|345,600|194,400|Completed
26-04-10|Capital Area|Goyang|Taerin Kim|Focus Lab|Office Equipment|Paper Shredder|4|187,000|748,000|553,520|194,480|Completed
26-04-10|Chungcheong|Sejong|Hajun Lee|Nextware|Peripherals|Docking Station|9|129,000|1,161,000|801,090|359,910|Refunded
26-04-11|Yeongnam|Changwon|Seah Jung|Dongmyeong Industry|Electronics|4K Monitor|3|289,000|867,000|658,920|208,080|Completed
26-04-11|Honam|Gwangju|Minho Kang|iNote|Accessories|Laptop Cleaner|19|9,000|171,000|70,110|100,890|Completed
26-04-12|Capital Area|Seoul|Serin Park|Onnuri Food|Furniture|Foot Rest|16|33,000|528,000|285,120|242,880|In Progress
26-04-12|Gangwon|Chuncheon|Haram Choi|Dream Tour|Office Equipment|Bluetooth Keyboard|14|57,000|798,000|478,800|319,200|Completed
26-04-13|Yeongnam|Pohang|Seojun Yoon|Mega Secure|Electronics|Document Scanner|5|219,000|1,095,000|777,450|317,550|Completed
26-04-13|Chungcheong|Daejeon|Hajin Yoo|Hive Edu|Peripherals|External SSD Case|12|39,000|468,000|271,440|196,560|Completed
26-04-14|Capital Area|Yongin|Doyoon Jang|Bright Health|Electronics|Projector|2|499,000|998,000|788,420|209,580|Completed
26-04-14|Honam|Yeosu|Seoyoon Jo|City Line|Accessories|Multi Charging Cable|27|15,000|405,000|202,500|202,500|Completed
26-04-15|Yeongnam|Jinju|Doyoon Baek|Luna Hotel|Furniture|Seat Cushion|21|19,000|399,000|183,540|215,460|Completed
26-04-15|Capital Area|Seoul|Chae-eun Yoo|Lead Ventures|Office Equipment|Conference Speakerphone|4|179,000|716,000|501,200|214,800|In Progress
26-04-16|Chungcheong|Asan|Yuchan Noh|Eduwave|Electronics|Tablet Stand|18|26,000|468,000|248,040|219,960|Completed
26-04-16|Gangwon|Sokcho|Jian Moon|Blue Resort|Peripherals|Wireless Presenter|7|67,000|469,000|286,090|182,910|Completed
26-04-17|Capital Area|Seoul|Jihoo Han|Pine Logic|Office Equipment|Standing Desk Controller|3|215,000|645,000|496,650|148,350|Completed
26-04-17|Yeongnam|Busan|Jiyu Seo|MediPlus|Accessories|Wrist Rest|23|17,000|391,000|172,040|218,960|Completed
26-04-18|Honam|Gwangju|Hayul Shin|Good Home Care|Furniture|Drawer Monitor Riser|9|61,000|549,000|356,850|192,150|Completed
26-04-18|Capital Area|Pangyo|Taeyoon Oh|Core Soft|Electronics|Video Conference Camera|6|159,000|954,000|705,960|248,040|Completed`.split('\n').map(r=>r.split('|'));
const SUM=[['Category','Total Revenue'],['Office Equipment','5,414,000'],['Peripherals','4,343,000'],['Accessories','2,259,000'],['Electronics','7,429,000'],['Furniture','3,642,000'],['Grand Total','23,087,000']];
const LOW=['348,000','392,000','372,000','171,000','391,000'],HIGH=['894,000','1,161,000','1,095,000','998,000','954,000'];

define('data-sheet',`<style>${CTRL}
:host{display:block;flex:1;min-width:0;position:relative;overflow:hidden;background:#fdfdfd;font-family:Roboto,sans-serif}
table{border-collapse:separate;border-spacing:0;table-layout:fixed;width:100%}
th,td{height:15px;line-height:14px;padding:0;text-align:center;font-weight:400;font-size:10px;white-space:nowrap;border-right:1px solid #e9e9e9;border-bottom:1px solid #e9e9e9;color:#333;overflow:visible}
thead th{height:20px;line-height:12px;padding-top:6px;background:#efefef;color:#777;border-color:#efefef;border-bottom-color:#ddd}
tbody th.r{background:#efefef;color:#777;border-color:#efefef #ddd #efefef #efefef;font-family:"Open Sans",sans-serif}
tbody th.h{background:#1f2b3b;color:#fff;font-weight:700;border-color:#1f2b3b;position:relative}
.h button{position:absolute;right:1px;top:1px;width:12px;height:12px;background:#fff}
.h button::after{content:"";border:2px solid transparent;border-top:3px solid #777;border-bottom:0}
td.d{text-align:left}.h.d{padding-right:17px}
tr.z td.t{background:#d9d9d9;border-color:#d9d9d9}
tr td.t.lo{background:#ffc7ce;color:#a8232f;border-color:#ffc7ce}
tr td.t.hi{background:#c6efce;color:#2a7a35;border-color:#c6efce}
tr.end td.t{border-bottom-color:#111}
.p{border-color:#555;color:#333}.pl{border-right-color:#555}.ph{background:#334057;color:#fff;font-weight:700}.pt{background:#e4e4ea;font-weight:700;color:#111}
sum-chart{position:absolute;left:1000px;top:154px}
</style><table><colgroup></colgroup><thead><tr></tr></thead><tbody></tbody></table><sum-chart></sum-chart>`,(h,s)=>{
  s.querySelector('colgroup').innerHTML='<col style="width:21px">'+COLS.map(([,w])=>w?`<col style="width:${w}px">`:'<col>').join('');
  s.querySelector('thead tr').innerHTML='<th></th>'+COLS.map(([c])=>`<th${c=='B'?' style="padding-right:17px"':''}>${c}</th>`).join('');
  let out='';
  for(let r=1;r<=57;r++){
    const d=r==1?HEAD:DATA[r-2];
    let row=`<th class="r">${r}</th>`;
    COLS.forEach(([c],i)=>{
      if(i<13&&d){
        if(r==1)row+=`<th class="h${i?'':' d'}">${d[i]}<button aria-label="Filter ${d[i]}"></button></th>`;
        else{let k='t';if(!i)k+=' d';if(i==9&&LOW.includes(d[i]))k+=' lo';if(i==9&&HIGH.includes(d[i]))k+=' hi';row+=`<td class="${k}">${d[i]}</td>`;}
      }else if((c=='P'||c=='Q')&&r<8)row+=`<td class="p ${r==1?'ph':r==7?'pt':''}">${SUM[r-1][c=='P'?0:1]}</td>`;
      else row+=c=='O'&&r<8?'<td class="pl"></td>':'<td></td>';
    });
    out+=`<tr class="${r%2==0?'z':''}${r==37?' end':''}">${row}</tr>`;
  }
  s.querySelector('tbody').innerHTML=out;
});

define('sum-chart',`<style>:host{display:block;width:454px;height:225px}svg{display:block;font-family:Roboto,sans-serif}text{fill:#333}</style><svg width="454" height="225" viewBox="0 0 454 225"></svg>`,(h,s)=>{
  const bars=[['Furniture',3642],['Electronics',7429],['Accessories',2259],['Peripherals',4343],['Office Equipment',5414]];
  let o='<rect x=".5" y=".5" width="453" height="224" fill="#fefefe" stroke="#8c8c8c"/><text x="227" y="25" font-size="17" font-weight="700" text-anchor="middle" style="fill:#111">Category Total Revenue Comparison</text>';
  for(let i=0;i<5;i++){const x=Math.round(88+i*62.8)+.5;
    o+=`<path d="M${x} 43V201" stroke="#9a9a9a"/><text x="${x}" y="215" font-size="10" text-anchor="middle">${i?i*2+',000,000':'0'}</text>`;}
  o+='<path d="M86 198.5H340" stroke="#9a9a9a"/>';
  bars.forEach(([n,v],i)=>{const y=51+i*31;
    o+=`<path d="M85 ${43.5+i*31}h3" stroke="#9a9a9a"/><rect x="89" y="${y}" width="${Math.round(v*.0314)}" height="15" fill="#1b698a"/><text x="79" y="${y+11}" font-size="9" text-anchor="end">${n}</text>`;});
  o+='<rect x="377" y="125" width="6" height="6" fill="#1b698a"/><text x="385" y="131" font-size="9">Total Revenue</text>';
  s.querySelector('svg').innerHTML=o;
});

define('v-scroll',`<style>:host{display:flex;flex-direction:column;align-items:center;width:14px;padding:9px 0 2px;gap:3px;background:#efefef;box-sizing:border-box}
i{flex:1;width:6px;border-radius:3px;background:#767676;margin-bottom:4px}</style><ui-icon name="triU"></ui-icon><i></i><ui-icon name="triD"></ui-icon>`);

define('sheet-footer',`<style>${CTRL}
:host{display:block}
.tabs{display:flex;align-items:center;height:25px;padding-left:16px}.tabs>ui-icon{margin-right:17px}
.tab{align-self:stretch;width:67px;background:#fff;margin-left:37px;border-radius:0 0 4px 4px}
.tab span{border-bottom:2px solid #1e7f4c;line-height:17px}
.add{margin-left:35px}.sp{flex:1}
.hs{width:571px;display:flex;align-items:center;gap:4px;padding:0 16px 0 0}.hs .tr{flex:1;height:12px;background:#f6f6f6;display:flex;align-items:center;padding:0 48px 0 28px}.tr i{height:6px;flex:1;border-radius:3px;background:#767676}
.st{display:flex;align-items:center;height:17px;font-size:8px;background:#f5f5f5;padding:0 14px 0 8px}
.st b{display:flex;align-items:center;gap:3px;margin-left:15px}
.st button{width:31px;height:17px}.st .on{background:#dedede}
.z{display:flex;align-items:center;gap:4px;margin-left:6px}
input{appearance:none;width:77px;height:10px;background:linear-gradient(#999,#999) center/100% 1px no-repeat}
input::-webkit-slider-thumb{appearance:none;width:4px;height:9px;background:#666}
</style><div class="tabs"><ui-icon name="lt"></ui-icon><ui-icon name="gt" style="color:#999;margin:0"></ui-icon><button class="tab"><span>Order Data</span></button><button class="add" aria-label="Add sheet"><ui-icon name="plus"></ui-icon></button><span class="sp"></span>
<ui-icon name="dots" style="margin-right:14px"></ui-icon><div class="hs"><ui-icon name="triL"></ui-icon><span class="tr"><i></i></span><ui-icon name="triR"></ui-icon></div></div>
<div class="st"><span>Ready</span><b><ui-icon name="access"></ui-icon>Accessibility: Investigate</b><span class="sp"></span>
<button class="on" aria-label="Normal view"><ui-icon name="vgrid"></ui-icon></button><button aria-label="Page layout view"><ui-icon name="vpage"></ui-icon></button><button aria-label="Page break view"><ui-icon name="vbreak"></ui-icon></button>
<span class="z"><span>−</span><input type="range" aria-label="Zoom" value="50"><span>+</span></span><span style="margin-left:11px">100%</span></div>`);

define('work-book',`<style>
:host{display:flex;flex-direction:column;background:#efefef;margin:1px 4px 3px 2px;border-radius:7px;overflow:hidden;box-sizing:border-box}
.mid{flex:1;display:flex;min-height:0;margin-top:2px}
</style><title-bar></title-bar><ribbon-tabs></ribbon-tabs><ribbon-bar></ribbon-bar><formula-bar></formula-bar>
<div class="mid"><data-sheet></data-sheet><v-scroll></v-scroll></div><sheet-footer></sheet-footer>`);

/* ---------- assistant panel ---------- */
define('chat-header',`<style>${CTRL}
:host{display:grid;grid-template-columns:1fr auto 1fr;align-items:center;height:34px;border-bottom:1px solid #eef0ee;padding:0 13px;color:#555}
.l,.r{display:flex;align-items:center}.l{gap:13px}.r{justify-content:flex-end}
h1{margin:0;font:italic 700 14px Lato,sans-serif;color:#333}
</style><div class="l"><button aria-label="Menu"><ui-icon name="burger"></ui-icon></button><button aria-label="Back"><ui-icon name="back"></ui-icon></button><button aria-label="Forward" style="color:#c9cec9"><ui-icon name="fwd"></ui-icon></button></div>
<h1>inline AI</h1>
<div class="r"><button aria-label="Effects"><ui-icon name="wand"></ui-icon></button><button style="margin-left:12px" aria-label="Side panel"><ui-icon name="panel"></ui-icon></button><button style="margin-left:21px" aria-label="Minimize"><ui-icon name="min"></ui-icon></button><button style="margin-left:27px" aria-label="Maximize"><ui-icon name="max"></ui-icon></button><button style="margin-left:28px" aria-label="Close"><ui-icon name="close"></ui-icon></button></div>`);
define('user-message',`<style>:host{display:block;background:#e9f0e9;border:1px solid #d5e3d8;border-radius:12px;padding:11px 9px 9px;line-height:16px;margin:0 18px 0 11px}</style><slot></slot>`);
define('tool-step',`<style>:host{display:flex;font-size:10px;line-height:16px;color:#777}button{font:inherit;color:inherit;background:none;border:0;padding:0;display:flex;align-items:center;gap:3px}</style><button><slot></slot><ui-icon name="gts"></ui-icon></button>`);
define('chat-thread',`<style>
:host{display:block;padding-top:8px;color:#3c3f3d;font-size:12px;line-height:20px}
.a{margin:10px 18px 0 18px}p{margin:0 0 8px}tool-step{margin:0 0 8px}.ok{font-size:10px;line-height:16px;color:#4f7563;margin:0 0 8px}
h2{font-size:13px;line-height:20px;margin:14px 0 4px;font-weight:600;color:#2b2e2c}
ul{margin:0;padding-left:17px}li{line-height:22px;height:22px}b{font-weight:600;color:#2b2e2c}ul+h2{margin-top:10px}
code{font:600 11px Inter,sans-serif;background:#e8ebe7;border:1px solid #a9b0ab;border-radius:3px;padding:0 6px;line-height:15px;display:inline-block;color:#555}
</style>
<user-message>Change the chart on the right to a bar chart and title it Category Total Revenue Comparison.</user-message>
<div class="a"><p>I’ll update the chart on the right now — switch it to a bar chart and set the title — then verify the final chart configuration.</p>
<tool-step>Edited Excel Workbook</tool-step><p>The chart update is complete. I’ll verify the chart type and title now.</p><tool-step>Explored Excel Workbook</tool-step>
<p class="ok">No error found</p><p>Done.</p>
<h2>Updated</h2><ul><li>Changed the chart on the right to a <b>bar chart</b></li><li>Set the title to <b>Category Total Revenue Comparison</b></li></ul>
<h2>Verified</h2><ul><li>Chart type: <code>BarClustered</code></li><li>Title applied correctly</li><li>No errors found</li></ul>
<ui-icon name="caret" style="margin:9px 0 0 12px"></ui-icon></div>`);
define('chat-composer',`<style>${CTRL}
:host{display:block;padding:0 11px 9px}
.ctx{margin:0 5px 0 6px;background:#e9f0e9;border:1px solid #d5e3d8;border-bottom:0;border-radius:12px 12px 0 0;padding:6px 10px 8px;font-size:8px;color:#777;height:46px}
.ctx div{display:flex;align-items:center;line-height:14px}.ctx div+div{margin-top:2px}.f{font-size:10px;color:#4a524d;margin:0 6px 0 2px}
.pill{background:#fafcfa;border-radius:8px;padding:0 7px;font-size:9px;line-height:16px;color:#5b6a62}.pill b{font-weight:600;color:#3f5a4b}
.box{background:#fff;border:1px solid #d7e2da;border-radius:14px;height:89px;margin-top:-2px;position:relative;box-shadow:0 1px 4px #0001;padding:14px 15px 0;display:flex;flex-direction:column;gap:16px}
input{font-size:12px;height:18px;outline:0}input::placeholder{color:#a5aaa6;opacity:1}
.row{display:flex;align-items:center;font-size:10px;color:#55645c}.clip{width:24px;height:24px;border-radius:50%;background:#eff4ef}
.m{gap:5px;margin-left:15px}.g{gap:5px;margin-left:auto;color:#444;font-weight:500}.send{width:24px;height:24px;border-radius:50%;background:#d3d6d3;margin-left:12px}
</style><div class="ctx"><div>You’re looking at:</div><div><ui-icon name="xlsx"></ui-icon><span class="f">en_excel_direct_control_demo.xlsx</span><span class="pill">Looking at: <b>Sheet Order Data</b></span></div></div>
<div class="box"><input aria-label="Reply" placeholder="Reply..."><div class="row"><button class="clip" aria-label="Attach"><ui-icon name="clip"></ui-icon></button><button class="m"><ui-icon name="dbl"></ui-icon>Accept all edits<ui-icon name="chev"></ui-icon></button><button class="g"><ui-icon name="gpt"></ui-icon>GPT-5.4<ui-icon name="chevL"></ui-icon></button><button class="send" aria-label="Send"><ui-icon name="up"></ui-icon></button></div></div>`);
define('chat-panel',`<style>
:host{display:flex;flex-direction:column;background:#fafaf7;margin-top:1px;margin-bottom:1px;border-right:1px solid #aab;box-sizing:border-box;font-family:Inter,sans-serif;font-size:12px;position:relative}
.main{flex:1;display:flex;min-height:0}chat-thread{flex:1;min-width:0}.bar{width:5px;margin-left:-5px;align-self:flex-end;height:232px;background:#d5e8da;border-radius:3px;margin-bottom:8px}
.dot{position:absolute;right:4px;top:4px;width:6px;height:6px;border-radius:50%;background:#6a5fd8}
</style><chat-header></chat-header><div class="main"><chat-thread></chat-thread><i class="bar"></i></div><chat-composer></chat-composer><i class="dot"></i>`);
</script>
</body>
</html>
